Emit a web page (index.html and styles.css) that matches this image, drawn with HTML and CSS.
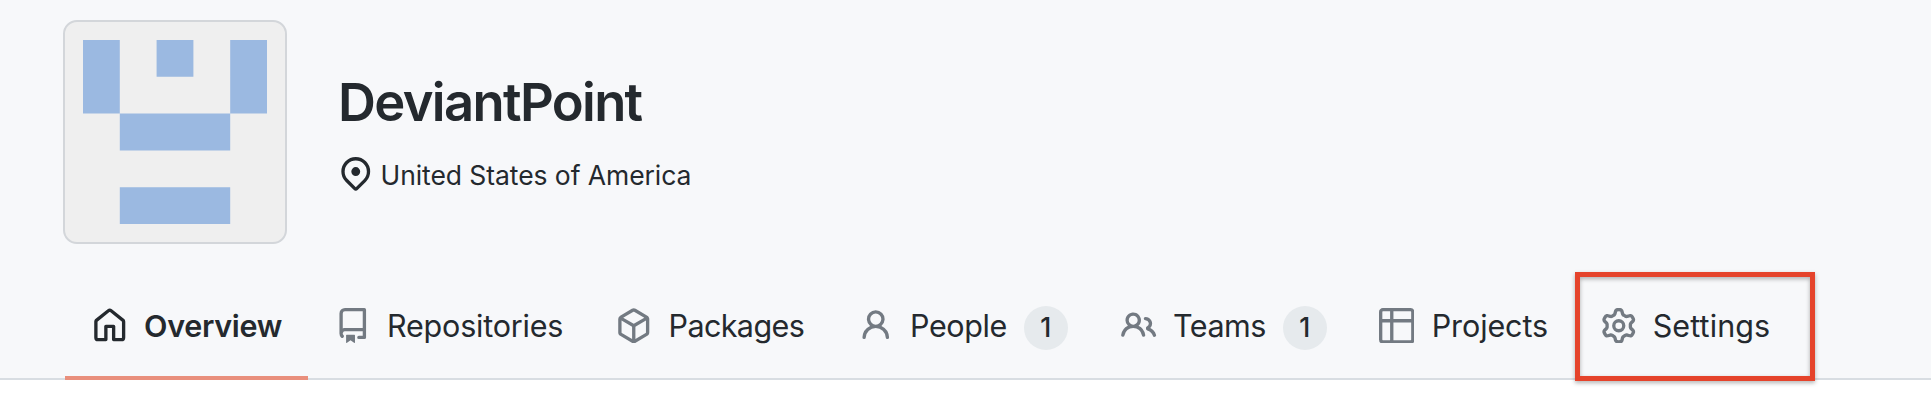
FILE: index.html
```
<!DOCTYPE html>
<html lang="en">
<head>
<meta charset="utf-8">
<title>DeviantPoint</title>
<link rel="stylesheet" href="styles.css">
</head>
<body>
<header class="page-head">
  <div class="profile">
    <div class="avatar">
      <svg viewBox="0 0 5 5" fill="#9bb9e1"><path d="M0 0h1v2h-1zM2 0h1v1h-1zM4 0h1v2h-1zM1 2h3v1h-3zM1 4h3v1h-3z"/></svg>
    </div>
    <div class="profile-info">
      <h1 class="name">DeviantPoint</h1>
      <div class="location">
        <svg class="pin" viewBox="0 0 16 16"><path fill-rule="evenodd" d="M11.536 3.464a5 5 0 010 7.072L8 14.07l-3.536-3.535a5 5 0 117.072-7.072v.001zm1.06 8.132a6.5 6.5 0 10-9.192 0l3.535 3.536a1.5 1.5 0 002.122 0l3.535-3.536zM8 9a2 2 0 100-4 2 2 0 000 4z"/></svg>
        <span class="place">United States of America</span>
      </div>
    </div>
  </div>
  <nav class="tabs">
    <a class="tab tab-selected">
      <svg class="icon" viewBox="0 0 16 16"><path fill-rule="evenodd" d="M8.156 1.835a.25.25 0 00-.312 0l-5.25 4.2a.25.25 0 00-.094.196v7.019c0 .138.112.25.25.25H5.5V8.25a.75.75 0 01.75-.75h3.5a.75.75 0 01.75.75v5.25h2.75a.25.25 0 00.25-.25V6.23a.25.25 0 00-.094-.195l-5.25-4.2zM6.906.664a1.75 1.75 0 012.187 0l5.25 4.2c.415.332.657.835.657 1.367v7.019A1.75 1.75 0 0113.25 15h-3.5a.75.75 0 01-.75-.75V9H7v5.25a.75.75 0 01-.75.75h-3.5A1.75 1.75 0 011 13.25V6.23c0-.531.242-1.034.657-1.366l5.25-4.2z"/></svg>
      <span class="label label-overview">Overview</span>
    </a>
    <a class="tab">
      <svg class="icon" viewBox="0 0 16 16"><path fill-rule="evenodd" d="M2 2.5A2.5 2.5 0 014.5 0h8.75a.75.75 0 01.75.75v12.5a.75.75 0 01-.75.75h-2.5a.75.75 0 110-1.5h1.75v-2h-8a1 1 0 00-.714 1.7.75.75 0 01-1.072 1.05A2.495 2.495 0 012 11.5v-9zm10.5-1V9h-8c-.356 0-.694.074-1 .208V2.5a1 1 0 011-1h8zM5 12.25v3.25a.25.25 0 00.4.2l1.45-1.087a.25.25 0 01.3 0L8.6 15.7a.25.25 0 00.4-.2v-3.25a.25.25 0 00-.25-.25h-3.5a.25.25 0 00-.25.25z"/></svg>
      <span class="label label-repositories">Repositories</span>
    </a>
    <a class="tab">
      <svg class="icon" viewBox="0 0 16 16"><path fill-rule="evenodd" d="M8.878.392a1.75 1.75 0 00-1.756 0l-5.25 3.045A1.75 1.75 0 001 4.951v6.098c0 .624.332 1.2.872 1.514l5.25 3.045a1.75 1.75 0 001.756 0l5.25-3.045c.54-.313.872-.89.872-1.514V4.951c0-.624-.332-1.2-.872-1.514L8.878.392zM7.875 1.69a.25.25 0 01.25 0l4.63 2.685L8 7.133 3.245 4.375l4.63-2.685zM2.5 5.677v5.372c0 .09.047.171.125.216l4.625 2.683V8.432L2.5 5.677zm6.25 8.271l4.625-2.683a.25.25 0 00.125-.216V5.677L8.75 8.432v5.516z"/></svg>
      <span class="label label-packages">Packages</span>
    </a>
    <a class="tab">
      <svg class="icon" viewBox="0 0 16 16"><path fill-rule="evenodd" d="M10.5 5a2.5 2.5 0 11-5 0 2.5 2.5 0 015 0zm.061 3.073a4 4 0 10-5.123 0 6.004 6.004 0 00-3.431 5.142.75.75 0 001.498.07 4.5 4.5 0 018.99 0 .75.75 0 101.498-.07 6.005 6.005 0 00-3.432-5.142z"/></svg>
      <span class="label label-people">People</span>
      <span class="counter">1</span>
    </a>
    <a class="tab">
      <svg class="icon" viewBox="0 0 16 16"><path fill-rule="evenodd" d="M5.5 3.5a2 2 0 100 4 2 2 0 000-4zM2 5.5a3.5 3.5 0 115.898 2.549 5.507 5.507 0 013.034 4.084.75.75 0 11-1.482.235 4.001 4.001 0 00-7.9 0 .75.75 0 01-1.482-.236A5.507 5.507 0 013.102 8.05 3.49 3.49 0 012 5.5zM11 4a.75.75 0 100 1.5 1.5 1.5 0 01.666 2.844.75.75 0 00-.416.672v.352a.75.75 0 00.574.73c1.2.289 2.162 1.2 2.522 2.372a.75.75 0 101.434-.44 5.01 5.01 0 00-2.56-3.012A3 3 0 0011 4z"/></svg>
      <span class="label label-teams">Teams</span>
      <span class="counter">1</span>
    </a>
    <a class="tab">
      <svg class="icon" viewBox="0 0 16 16"><path fill-rule="evenodd" d="M0 1.75C0 .784.784 0 1.75 0h12.5C15.216 0 16 .784 16 1.75v12.5A1.75 1.75 0 0114.25 16H1.75A1.75 1.75 0 010 14.25V1.75zM1.5 6.5v7.75c0 .138.112.25.25.25H5v-8H1.5zM5 5H1.5V1.75a.25.25 0 01.25-.25H5V5zm1.5 1.5v8h7.75a.25.25 0 00.25-.25V6.5h-8zm8-1.5h-8V1.5h7.75a.25.25 0 01.25.25V5z"/></svg>
      <span class="label label-projects">Projects</span>
    </a>
    <a class="tab tab-settings">
      <svg class="icon" viewBox="0 0 16 16"><path fill-rule="evenodd" d="M7.429 1.525a6.593 6.593 0 011.142 0c.036.003.108.036.137.146l.289 1.105c.147.56.55.967.997 1.189.174.086.341.183.501.29.417.278.97.423 1.53.27l1.102-.303c.11-.03.175.016.195.046.219.31.41.641.573.989.014.031.022.11-.059.19l-.815.806c-.411.406-.562.957-.53 1.456a4.588 4.588 0 010 .582c-.032.499.119 1.05.53 1.456l.815.806c.08.08.073.159.059.19a6.494 6.494 0 01-.573.99c-.02.029-.086.074-.195.045l-1.103-.303c-.559-.153-1.112-.008-1.529.27-.16.107-.327.204-.5.29-.449.222-.851.628-.998 1.189l-.289 1.105c-.029.11-.101.143-.137.146a6.613 6.613 0 01-1.142 0c-.036-.003-.108-.037-.137-.146l-.289-1.105c-.147-.56-.55-.967-.997-1.189a4.502 4.502 0 01-.501-.29c-.417-.278-.97-.423-1.53-.27l-1.102.303c-.11.03-.175-.016-.195-.046a6.492 6.492 0 01-.573-.989c-.014-.031-.022-.11.059-.19l.815-.806c.411-.406.562-.957.53-1.456a4.587 4.587 0 010-.582c.032-.499-.119-1.05-.53-1.456l-.815-.806c-.08-.08-.073-.159-.059-.19a6.44 6.44 0 01.573-.99c.02-.029.086-.075.195-.045l1.103.303c.559.153 1.112.008 1.529-.27.16-.107.327-.204.5-.29.449-.222.851-.628.998-1.189l.289-1.105c.029-.11.101-.143.137-.146zM8 0c-.236 0-.47.01-.701.03-.743.065-1.29.615-1.458 1.261l-.29 1.106c-.017.066-.078.158-.211.224a5.994 5.994 0 00-.668.386c-.123.082-.233.09-.3.071L3.27 2.776c-.644-.177-1.392.02-1.82.63a7.977 7.977 0 00-.704 1.217c-.315.675-.111 1.422.363 1.891l.815.806c.05.048.098.147.088.294a6.084 6.084 0 000 .772c.01.147-.038.246-.088.294l-.815.806c-.474.469-.678 1.216-.363 1.891.2.428.436.835.704 1.218.428.609 1.176.806 1.82.63l1.103-.303c.066-.019.176-.011.299.071.213.143.436.272.668.386.133.066.194.158.212.224l.289 1.106c.169.646.715 1.196 1.458 1.26a8.094 8.094 0 001.402 0c.743-.064 1.29-.614 1.458-1.26l.29-1.106c.017-.066.078-.158.211-.224a5.98 5.98 0 00.668-.386c.123-.082.233-.09.3-.071l1.102.302c.644.177 1.392-.02 1.82-.63.268-.382.505-.789.704-1.217.315-.675.111-1.422-.364-1.891l-.814-.806c-.05-.048-.098-.147-.088-.294a6.1 6.1 0 000-.772c-.01-.147.039-.246.088-.294l.814-.806c.475-.469.679-1.216.364-1.891a7.992 7.992 0 00-.704-1.218c-.428-.609-1.176-.806-1.82-.63l-1.103.303c-.066.019-.176.011-.299-.071a5.991 5.991 0 00-.668-.386c-.133-.066-.194-.158-.212-.224L10.16 1.29C9.99.645 9.444.095 8.701.031A8.094 8.094 0 008 0zm1.5 8a1.5 1.5 0 11-3 0 1.5 1.5 0 013 0zM11 8a3 3 0 11-6 0 3 3 0 016 0z"/></svg>
      <span class="label label-settings">Settings</span>
      <span class="callout"></span>
    </a>
  </nav>
</header>
</body>
</html>
```

FILE: styles.css
```
* { box-sizing: border-box; }
body {
  margin: 0;
  min-height: 404px;
  background: #fff;
  color: #24292e;
  font-family: Inter, "Liberation Sans", sans-serif;
}
.page-head {
  height: 380px;
  padding-top: 20px;
  background: #f7f8fa;
  border-bottom: 2px solid #d8dde2;
  display: flex;
  flex-direction: column;
  justify-content: space-between;
}
.profile {
  display: flex;
  gap: 51px;
  padding-left: 63px;
}
.avatar {
  width: 224px;
  height: 224px;
  padding: 18.3px;
  border: 2px solid #d3d6da;
  border-radius: 14px;
  background: #efefef;
}
.avatar svg { display: block; width: 184px; height: 184px; }
.profile-info { padding-top: 49px; }
.name {
  margin: 0;
  font-size: 52.5px;
  line-height: 66px;
  font-weight: 620;
  letter-spacing: -1.65px;
  white-space: nowrap;
}
.location {
  display: flex;
  align-items: center;
  gap: 7px;
  margin-top: 19px;
  height: 40px;
}
.pin { width: 35.5px; height: 35.5px; fill: currentColor; }
.place {
  padding-top: 2px;
  font-size: 26.5px;
  line-height: 40px;
  letter-spacing: -.07px;
  white-space: nowrap;
}

.tabs {
  display: grid;
  grid-template-columns: 243px 281px 242px 263px 257.7px 222px 241px;
  padding-left: 65px;
  height: 104px;
  margin-bottom: -2px;
}
.tab {
  position: relative;
  display: flex;
  align-items: center;
  padding: 0 0 1px 27px;
  border-bottom: 4px solid transparent;
  white-space: nowrap;
}
.tab-selected { border-bottom-color: #e98f7c; font-weight: 600; }
.icon { flex: none; width: 35.5px; height: 35.5px; fill: #737a82; }
.tab-selected .icon { fill: #24292e; }
.label { margin-left: 16.5px; font-size: 30.5px; line-height: 40px; }
.label-overview { letter-spacing: -.3px; }
.label-repositories { letter-spacing: -.2px; }
.label-packages { margin-left: 17px; letter-spacing: -.6px; }
.label-people { letter-spacing: -.4px; }
.label-teams { letter-spacing: -.5px; }
.label-projects { margin-left: 17.5px; letter-spacing: -.1px; }
.label-settings { letter-spacing: .1px; }
.counter {
  width: 44px;
  height: 44px;
  margin: 5px 0 0 17px;
  border-radius: 50%;
  background: #e6eaed;
  font-size: 26.5px;
  font-weight: 500;
  line-height: 43px;
  text-align: center;
}
.callout {
  position: absolute;
  left: 1px;
  top: -4px;
  width: 240px;
  height: 109px;
  border: 5px solid #e5432b;
  filter: drop-shadow(0 2px 2px rgba(0, 0, 0, .3));
}
```
